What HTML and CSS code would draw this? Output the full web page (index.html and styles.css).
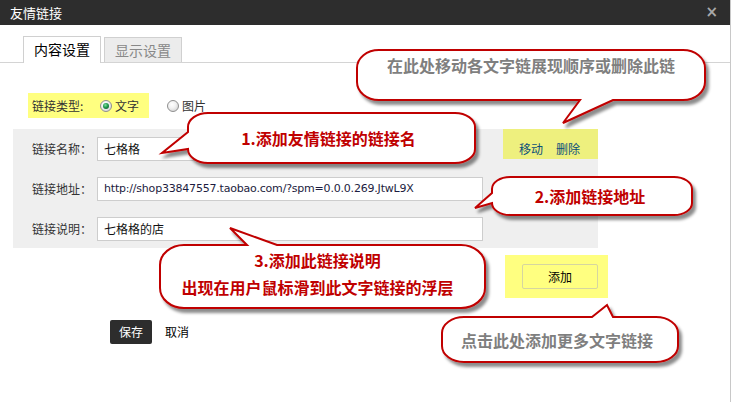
FILE: index.html
```html
<!DOCTYPE html>
<html>
<head>
<meta charset="utf-8">
<title>友情链接</title>
<link rel="stylesheet" href="styles.css">
</head>
<body>
    <div class="dialog">
        <div class="titlebar">
            <span>友情链接</span>
            <span class="close">×</span>
        </div>

        <div class="tabs">
            <div class="tab active">内容设置</div>
            <div class="tab">显示设置</div>
        </div>

        <div class="type-row">
            <div class="type-hl">
                <span class="type-label">链接类型:</span>
                <span class="radio checked"></span>
                <span>文字</span>
            </div>
            <span class="radio"></span>
            <span>图片</span>
        </div>

        <div class="panel">
            <div class="fields">
                <div class="field">
                    <span class="field-label">链接名称：</span>
                    <div class="field-input short">七格格</div>
                </div>
                <div class="field">
                    <span class="field-label">链接地址：</span>
                    <div class="field-input url">http://shop33847557.taobao.com/?spm=0.0.0.269.JtwL9X</div>
                </div>
                <div class="field">
                    <span class="field-label">链接说明：</span>
                    <div class="field-input">七格格的店</div>
                </div>
            </div>
            <div class="ops">
                <span class="op">移动</span>
                <span class="op">删除</span>
            </div>
        </div>

        <div class="add-row">
            <div class="add-btn">添加</div>
        </div>

        <div class="footer">
            <div class="save">保存</div>
            <span class="cancel">取消</span>
        </div>
    </div>

    <!-- annotation callouts drawn over the dialog -->
    <svg class="callouts" width="734" height="402" viewBox="0 0 734 402">
        <defs>
            <filter id="shadow" x="-10%" y="-20%" width="120%" height="150%">
                <feDropShadow dx="3" dy="4" stdDeviation="1.6" flood-color="#000" flood-opacity="0.45"/>
            </filter>
        </defs>
        <g fill="#fff" stroke="#c00000" stroke-width="2" stroke-linejoin="miter" filter="url(#shadow)">
            <path d="M379,50 H683 A22,18 0 0 1 705,68 V82 A22,18 0 0 1 683,100 H613 L563,123 L580,100 H379 A22,18 0 0 1 357,82 V68 A22,18 0 0 1 379,50 Z"/>
            <path d="M208,113 H455 A20,14 0 0 1 475,127 V149 A20,14 0 0 1 455,163 H208 A20,14 0 0 1 188,149 L162,153 L188,132 V127 A20,14 0 0 1 208,113 Z"/>
            <path d="M510,177 H674 A18,12 0 0 1 692,189 V203 A18,12 0 0 1 674,215 H510 A18,12 0 0 1 492,203 L475,208 L492,193 V189 A18,12 0 0 1 510,177 Z"/>
            <path d="M184,245 H247 L230,228 L277,245 H461 A24,20 0 0 1 485,265 V288 A24,20 0 0 1 461,308 H184 A24,20 0 0 1 160,288 V265 A24,20 0 0 1 184,245 Z"/>
            <path d="M464,317 H592 L607,305 L613,317 H656 A22,16 0 0 1 678,333 V346 A22,16 0 0 1 656,362 H464 A22,16 0 0 1 442,346 V333 A22,16 0 0 1 464,317 Z"/>
        </g>
    </svg>

    <div class="note note-gray note-top">在此处移动各文字链展现顺序或删除此链</div>
    <div class="note note-red note-name">1.添加友情链接的链接名</div>
    <div class="note note-red note-url">2.添加链接地址</div>
    <div class="note note-red note-desc">
        <span>3.添加此链接说明</span>
        <span>出现在用户鼠标滑到此文字链接的浮层</span>
    </div>
    <div class="note note-gray note-add">点击此处添加更多文字链接</div>
</body>
</html>
```

FILE: styles.css
```css
html, body {
    margin: 0;
    padding: 0;
}
body {
    position: relative;
    width: 734px;
    height: 402px;
    overflow: hidden;
    background: #fff;
    color: #333;
    font: 12px/16px "Noto Sans CJK SC", sans-serif;
}
.dialog {
    width: 730px;
    height: 402px;
    border-right: 1px solid #c8c8c8;
}
.titlebar {
    display: flex;
    justify-content: space-between;
    height: 25px;
    padding: 0 12px 0 10px;
    background: #2d2d2d;
    color: #fff;
    font-size: 13px;
    line-height: 25px;
}
.close {
    color: #a8a8a8;
    font: bold 15px/25px "DejaVu Sans", sans-serif;
}

.tabs {
    display: flex;
    align-items: flex-end;
    gap: 3px;
    height: 26px;
    margin-top: 11px;
    padding-left: 23px;
    border-bottom: 1px solid #d4d4d4;
}
.tab {
    width: 76px;
    height: 24px;
    border: 1px solid #d0d0d0;
    border-bottom: none;
    background: #ececec;
    color: #888;
    font-size: 14px;
    line-height: 24px;
    text-align: center;
}
.tab.active {
    height: 26px;
    margin-bottom: -1px;
    background: #fff;
    color: #000;
    line-height: 25px;
}

.type-row {
    display: flex;
    align-items: center;
    height: 25px;
    margin: 30px 0 0 28px;
}
.type-hl {
    display: flex;
    align-items: center;
    box-sizing: border-box;
    width: 121px;
    height: 25px;
    margin-right: 18px;
    padding-left: 4px;
    background: #ffff80;
}
.type-label {
    width: 68px;
}
.radio {
    position: relative;
    box-sizing: border-box;
    width: 12px;
    height: 12px;
    margin-right: 3px;
    border: 1px solid #8f8f8f;
    border-radius: 50%;
    background: radial-gradient(circle at 40% 35%, #fff 0, #f2f2f2 40%, #c9c9c9 100%);
}
.radio.checked::after {
    position: absolute;
    top: 2px;
    left: 2px;
    width: 6px;
    height: 6px;
    border-radius: 50%;
    background: radial-gradient(circle at 40% 35%, #7fe0a0 0, #1f9a4e 45%, #0b4d24 100%);
    content: '';
}

.panel {
    display: flex;
    width: 585px;
    height: 119px;
    margin: 11px 0 0 13px;
    background: #efefef;
}
.fields {
    display: flex;
    flex-direction: column;
    gap: 16px;
    width: 490px;
    padding-top: 8px;
}
.field {
    display: flex;
    align-items: center;
    height: 24px;
}
.field-label {
    width: 65px;
    padding-left: 19px;
    color: #333;
}
.field-input {
    box-sizing: border-box;
    width: 386px;
    height: 24px;
    padding-left: 6px;
    border: 1px solid #cdcdcd;
    background: #fff;
    color: #111;
    line-height: 22px;
}
.field-input.short {
    width: 300px;
}
.field-input.url {
    color: #1c1c40;
    font-family: "DejaVu Sans", sans-serif;
    font-size: 11px;
    letter-spacing: -0.2px;
}
.ops {
    display: flex;
    gap: 13px;
    box-sizing: border-box;
    width: 95px;
    height: 30px;
    padding: 12px 0 0 16px;
    background: #eef07e;
}
.op {
    color: #0b4f7a;
}

.add-row {
    display: flex;
    align-items: center;
    justify-content: center;
    box-sizing: border-box;
    width: 103px;
    height: 43px;
    margin: 7px 0 0 505px;
    padding-left: 7px;
    background: #ffff80;
}
.add-btn {
    width: 74px;
    height: 23px;
    border: 1px solid #d6d6a0;
    border-radius: 2px;
    color: #000;
    line-height: 23px;
    text-align: center;
}

.footer {
    display: flex;
    align-items: center;
    gap: 13px;
    margin: 22px 0 0 110px;
}
.save {
    width: 42px;
    height: 24px;
    border-radius: 2px;
    background: #2d2d2d;
    color: #fff;
    line-height: 24px;
    text-align: center;
}
.cancel {
    color: #000;
}

/* callouts */
.callouts {
    position: absolute;
    top: 0;
    left: 0;
    pointer-events: none;
}
.note {
    position: absolute;
    display: flex;
    flex-direction: column;
    align-items: center;
    justify-content: center;
    font-size: 16px;
    font-weight: bold;
    line-height: 20px;
}
.note-red {
    color: #c00000;
}
.note-gray {
    color: #7f7f7f;
}
.note-top {
    top: 55px;
    left: 357px;
    width: 348px;
    height: 20px;
}
.note-name {
    top: 113px;
    left: 185px;
    width: 287px;
    height: 50px;
}
.note-url {
    top: 177px;
    left: 490px;
    width: 200px;
    height: 38px;
}
.note-desc {
    top: 247px;
    left: 155px;
    width: 325px;
    height: 54px;
    line-height: 27px;
}
.note-add {
    top: 318px;
    left: 439px;
    width: 236px;
    height: 43px;
}
```
